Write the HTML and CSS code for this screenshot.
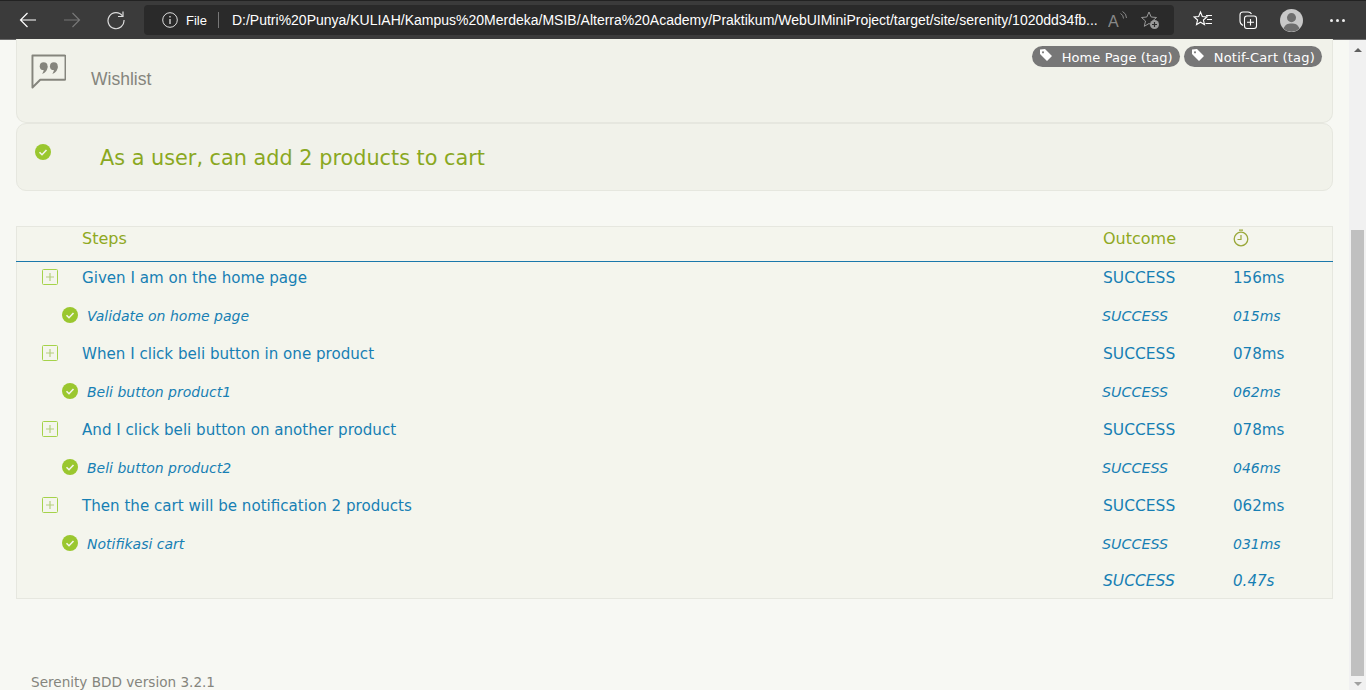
FILE: index.html
```html
<!DOCTYPE html>
<html lang="en">
<head>
<meta charset="utf-8">
<title>Serenity Report</title>
<link rel="stylesheet" href="styles.css">
</head>
<body>
<header class="chrome">
  <div class="nav">
    <svg class="nav-icon" viewBox="0 0 20 20"><path d="M18 10H2.500M9.500 3L2.500 10l7 7" fill="none" stroke="#fff" stroke-width="1.200"/></svg>
    <svg class="nav-icon" viewBox="0 0 20 20"><path d="M2 10h15.500M10.500 3l7 7-7 7" fill="none" stroke="#777" stroke-width="1.200"/></svg>
    <svg class="nav-icon" viewBox="0 0 20 20"><path d="M16.500 6A8 8 0 1 0 18 10" fill="none" stroke="#ddd" stroke-width="1.200"/><path d="M17 1.500V6.500H12" fill="none" stroke="#ddd" stroke-width="1.200"/></svg>
  </div>
  <div class="address">
    <svg class="info" viewBox="0 0 16 16"><circle cx="8" cy="8" r="7.300" fill="none" stroke="#ddd" stroke-width="1"/><path d="M8 7v5M8 4v1.500" stroke="#ddd" stroke-width="1.300"/></svg>
    <span class="file">File</span>
    <span class="sep"></span>
    <span class="url">D:/Putri%20Punya/KULIAH/Kampus%20Merdeka/MSIB/Alterra%20Academy/Praktikum/WebUIMiniProject/target/site/serenity/1020dd34fb...</span>
    <svg class="addr-icon" viewBox="0 0 20 20"><text x="0" y="17" class="read-a">A</text><path d="M12.500 3.500q3 1.500 3 5M14.500 1.500q4 2 4 6.500" fill="none" stroke="#888" stroke-width="1"/></svg>
    <svg class="addr-icon star-add" viewBox="0 0 20 20"><path d="M9 2l2.200 5 5.300.5-4 3.500 1.200 5.300L9 13.500 4.300 16.300 5.500 11l-4-3.500L6.800 7z" fill="none" stroke="#999" stroke-width="1"/><circle cx="14.500" cy="14.500" r="4.500" fill="#999"/><path d="M14.500 12v5M12 14.500h5" stroke="#2b2b2b" stroke-width="1.200"/></svg>
  </div>
  <div class="tools">
    <svg class="tool" viewBox="0 0 20 20"><path d="M7.500 2l1.800 4.500 4.700.4-3.600 3.100 1.100 4.700-4-2.500-4 2.500 1.100-4.700L1 6.900l4.700-.4z" fill="none" stroke="#fff" stroke-width="1.100"/><path d="M13 5.500h6M14 9.500h5M12.500 13.500h6.500" stroke="#fff" stroke-width="1.100"/></svg>
    <svg class="tool" viewBox="0 0 20 20"><rect x="6.500" y="6" width="12" height="12.500" rx="2.500" fill="none" stroke="#fff" stroke-width="1.100"/><path d="M12.500 9v6.500M9 12.250h7" stroke="#fff" stroke-width="1.100"/><path d="M5 15.500Q2 14 2 11V5q0-3 3-3h5q2.500 0 3.500 2" fill="none" stroke="#fff" stroke-width="1.100"/></svg>
    <svg class="avatar" viewBox="0 0 24 24"><circle cx="12" cy="12" r="12" fill="#c8c8c8"/><circle cx="12" cy="9" r="4.700" fill="#6e6e6e"/><path d="M3.800 20.500C5 16 8 15 12 15s7 1 8.200 5.500A12 12 0 0 1 3.800 20.500z" fill="#6e6e6e"/></svg>
    <span class="more"><i></i><i></i><i></i></span>
  </div>
</header>

<div class="viewport">
  <main class="page">
    <section class="card card-top">
      <div class="req">
        <svg class="quote" viewBox="0 0 36 36"><path d="M1.500 1.500h33a1 1 0 0 1 1 1v23a1 1 0 0 1-1 1H9.500l-8 8z" fill="none" stroke="#85857d" stroke-width="2" stroke-linejoin="round"/><circle cx="13" cy="12.500" r="4" fill="#85857d"/><circle cx="23.500" cy="12.500" r="4" fill="#85857d"/><path d="M17 12.500q0 6-5.500 8 2-2.500 1.500-5zM27.500 12.500q0 6-5.500 8 2-2.500 1.500-5z" fill="#85857d"/></svg>
        <span class="req-name">Wishlist</span>
      </div>
      <div class="tags">
        <span class="tag"><svg class="tag-icon" viewBox="0 0 14 14"><path d="M1 1.500l5-.5 7 7-5 5-7-7zM4 3.200a1 1 0 1 0 .01 0z" fill="#fff" fill-rule="evenodd"/></svg>Home Page (tag)</span>
        <span class="tag tag-wide"><svg class="tag-icon" viewBox="0 0 14 14"><path d="M1 1.500l5-.5 7 7-5 5-7-7zM4 3.200a1 1 0 1 0 .01 0z" fill="#fff" fill-rule="evenodd"/></svg>Notif-Cart (tag)</span>
      </div>
    </section>

    <section class="card card-title">
      <svg class="ok ok-title" viewBox="0 0 16 16"><circle cx="8" cy="8" r="8" fill="#9ac72f"/><path d="M4.500 8.200l2.500 2.500 4.500-4.700" fill="none" stroke="#f4f5ed" stroke-width="1.600"/></svg>
      <h1 class="title">As a user, can add 2 products to cart</h1>
    </section>

    <section class="steps">
      <div class="row head"><span></span><span>Steps</span><span>Outcome</span><span><svg class="timer" viewBox="0 0 16 18"><circle cx="8" cy="10" r="6.800" fill="none" stroke="#9aa83a" stroke-width="1.300"/><path d="M8 6v4.500H4.500M6 1.200h4" fill="none" stroke="#9aa83a" stroke-width="1.200"/></svg></span></div>

      <div class="row step"><span class="exp"><svg class="plus" viewBox="0 0 16 16"><rect x=".5" y=".5" width="15" height="15" rx="1" fill="none" stroke="#a5d24a"/><path d="M8 4v8M4 8h8" stroke="#b5cf7e" stroke-width="1.200"/></svg></span><span>Given I am on the home page</span><span class="out">SUCCESS</span><span>156ms</span></div>
      <div class="row sub"><span class="sub-ok"><svg class="ok" viewBox="0 0 16 16"><circle cx="8" cy="8" r="8" fill="#9ac72f"/><path d="M4.500 8.200l2.500 2.500 4.500-4.700" fill="none" stroke="#f4f5ed" stroke-width="1.600"/></svg></span><span class="sub-name">Validate on home page</span><span class="out">SUCCESS</span><span>015ms</span></div>

      <div class="row step"><span class="exp"><svg class="plus" viewBox="0 0 16 16"><rect x=".5" y=".5" width="15" height="15" rx="1" fill="none" stroke="#a5d24a"/><path d="M8 4v8M4 8h8" stroke="#b5cf7e" stroke-width="1.200"/></svg></span><span>When I click beli button in one product</span><span class="out">SUCCESS</span><span>078ms</span></div>
      <div class="row sub"><span class="sub-ok"><svg class="ok" viewBox="0 0 16 16"><circle cx="8" cy="8" r="8" fill="#9ac72f"/><path d="M4.500 8.200l2.500 2.500 4.500-4.700" fill="none" stroke="#f4f5ed" stroke-width="1.600"/></svg></span><span class="sub-name">Beli button product1</span><span class="out">SUCCESS</span><span>062ms</span></div>

      <div class="row step"><span class="exp"><svg class="plus" viewBox="0 0 16 16"><rect x=".5" y=".5" width="15" height="15" rx="1" fill="none" stroke="#a5d24a"/><path d="M8 4v8M4 8h8" stroke="#b5cf7e" stroke-width="1.200"/></svg></span><span>And I click beli button on another product</span><span class="out">SUCCESS</span><span>078ms</span></div>
      <div class="row sub"><span class="sub-ok"><svg class="ok" viewBox="0 0 16 16"><circle cx="8" cy="8" r="8" fill="#9ac72f"/><path d="M4.500 8.200l2.500 2.500 4.500-4.700" fill="none" stroke="#f4f5ed" stroke-width="1.600"/></svg></span><span class="sub-name">Beli button product2</span><span class="out">SUCCESS</span><span>046ms</span></div>

      <div class="row step"><span class="exp"><svg class="plus" viewBox="0 0 16 16"><rect x=".5" y=".5" width="15" height="15" rx="1" fill="none" stroke="#a5d24a"/><path d="M8 4v8M4 8h8" stroke="#b5cf7e" stroke-width="1.200"/></svg></span><span>Then the cart will be notification 2 products</span><span class="out">SUCCESS</span><span>062ms</span></div>
      <div class="row sub"><span class="sub-ok"><svg class="ok" viewBox="0 0 16 16"><circle cx="8" cy="8" r="8" fill="#9ac72f"/><path d="M4.500 8.200l2.500 2.500 4.500-4.700" fill="none" stroke="#f4f5ed" stroke-width="1.600"/></svg></span><span class="sub-name">Notifikasi cart</span><span class="out">SUCCESS</span><span>031ms</span></div>

      <div class="row total"><span></span><span></span><span class="out">SUCCESS</span><span>0.47s</span></div>
    </section>

    <footer class="foot">Serenity BDD version 3.2.1</footer>
  </main>

  <aside class="scrollbar">
    <span class="arrow-up"></span>
    <span class="track"><span class="thumb"></span></span>
    <span class="arrow-down"></span>
  </aside>
</div>
</body>
</html>
```

FILE: styles.css
```css
* { box-sizing: border-box; }
html, body { margin: 0; height: 100%; overflow: hidden; }
body {
  display: flex;
  flex-direction: column;
  background: #f7f8f3;
  font-family: "DejaVu Sans", Verdana, sans-serif;
}

/* browser chrome */
.chrome {
  height: 40px;
  flex: none;
  display: flex;
  align-items: center;
  background: #3b3b3b;
  border-top: 1px solid #222;
  border-bottom: 1px solid #6b6b6b;
}
.nav { display: flex; width: 144px; padding-left: 18px; gap: 24px; flex: none; }
.nav-icon { width: 20px; height: 20px; }
.address {
  width: 1030px;
  height: 30px;
  flex: none;
  display: flex;
  align-items: center;
  padding-left: 18px;
  background: #2a2a2a;
  border-radius: 4px;
  font-family: "Liberation Sans", Arial, sans-serif;
  font-size: 13px;
  color: #fff;
}
.info { width: 16px; height: 16px; flex: none; }
.file { margin-left: 8px; font-size: 13px; }
.sep { width: 1px; height: 16px; margin: 0 13px 0 11px; background: #777; }
.url { width: 865px; flex: none; white-space: nowrap; overflow: hidden; font-size: 14px; }
.addr-icon { width: 20px; height: 20px; flex: none; margin-left: 11px; }
.star-add { margin-left: 12px; }
.read-a { font-family: "Liberation Sans", Arial, sans-serif; font-size: 16px; fill: #888; }
.tools { display: flex; align-items: center; flex: 1; padding-left: 19px; }
.tool { width: 20px; height: 20px; margin-right: 25px; }
.avatar { width: 23px; height: 23px; margin-left: -3px; }
.more { display: flex; gap: 3px; margin-left: 27px; }
.more i { width: 3px; height: 3px; background: #eee; border-radius: 50%; }

/* page */
.viewport { flex: 1; min-height: 0; display: flex; }
.page { flex: 1; min-width: 0; padding: 0 16px; }
.card {
  background: #f1f2ea;
  border: 1px solid #e6e7df;
  border-radius: 10px;
}
.card-top {
  height: 84px;
  margin-top: -1px;
  border-top: 0;
  border-top-left-radius: 0;
  border-top-right-radius: 0;
  display: flex;
  justify-content: space-between;
}
.req { display: flex; padding: 15px 0 0 14px; }
.quote { width: 35px; height: 35px; }
.req-name {
  margin: 14px 0 0 25px;
  font-family: "Liberation Sans", Arial, sans-serif;
  font-size: 17.500px;
  line-height: 22px;
  color: #85857d;
}
.tags { display: flex; gap: 4px; padding: 7px 10px 0 0; }
.tag {
  height: 21px;
  display: flex;
  align-items: center;
  padding: 1px 7px 0 7px;
  border-radius: 11px;
  background: #777;
  color: #fff;
  font-size: 13px;
  letter-spacing: .1px;
  white-space: nowrap;
}
.tag-wide { letter-spacing: .2px; }
.tag-icon { width: 14px; height: 14px; margin: -5px 9px 0 0; }
.card-title {
  height: 68px;
  display: flex;
  margin-bottom: 35px;
}
.ok { width: 16px; height: 16px; display: block; }
.ok-title { margin: 20px 0 0 18px; }
.title {
  margin: 21px 0 0 49px;
  font-size: 20.800px;
  line-height: 26px;
  font-weight: 400;
  color: #8aa81f;
}

/* steps table */
.steps {
  background: #f4f5ed;
  border: 1px solid #e6e7df;
  color: #177fb4;
  font-size: 15.100px;
}
.row {
  display: grid;
  grid-template-columns: 65px 1021px 130px 1fr;
  align-items: center;
  height: 38px;
  padding-bottom: 7px;
}
.head {
  height: 35px;
  padding: 0 0 11px 1px;
  border-bottom: 1px solid #1a78ab;
  margin: 0 -1px;
  font-size: 16px;
  color: #8fa822;
}
.timer { width: 16px; height: 18px; display: block; margin-top: -2px; }
.exp { display: flex; padding-left: 25px; margin-bottom: 2px; }
.plus { width: 16px; height: 16px; display: block; }
.out { font-size: 15.500px; }
.sub { font-size: 14px; font-style: italic; }
.sub .out { font-size: 14.300px; margin-left: -1px; }
.sub-ok { padding-left: 45px; margin-bottom: 2px; }
.sub-name { margin-left: 5px; }
.total { height: 32px; padding-bottom: 3px; font-style: italic; }

.foot {
  margin: 75px 0 0 15px;
  font-size: 13.600px;
  line-height: 16px;
  color: #85857d;
}

/* scrollbar */
.scrollbar {
  width: 17px;
  flex: none;
  display: flex;
  flex-direction: column;
  align-items: center;
  background: #f1f1f1;
}
.arrow-up, .arrow-down {
  flex: none;
  width: 0;
  border-left: 4px solid transparent;
  border-right: 4px solid transparent;
}
.arrow-up { height: 4px; margin: 8px 0 5px; border-bottom: 4px solid #606060; }
.arrow-down { height: 4px; margin: 6px 0 4px; border-top: 4px solid #a0a0a0; }
.track { flex: 1; width: 100%; display: flex; flex-direction: column; justify-content: flex-end; padding: 0 2px; }
.thumb { height: 446px; background: #c0c0c0; }
```
